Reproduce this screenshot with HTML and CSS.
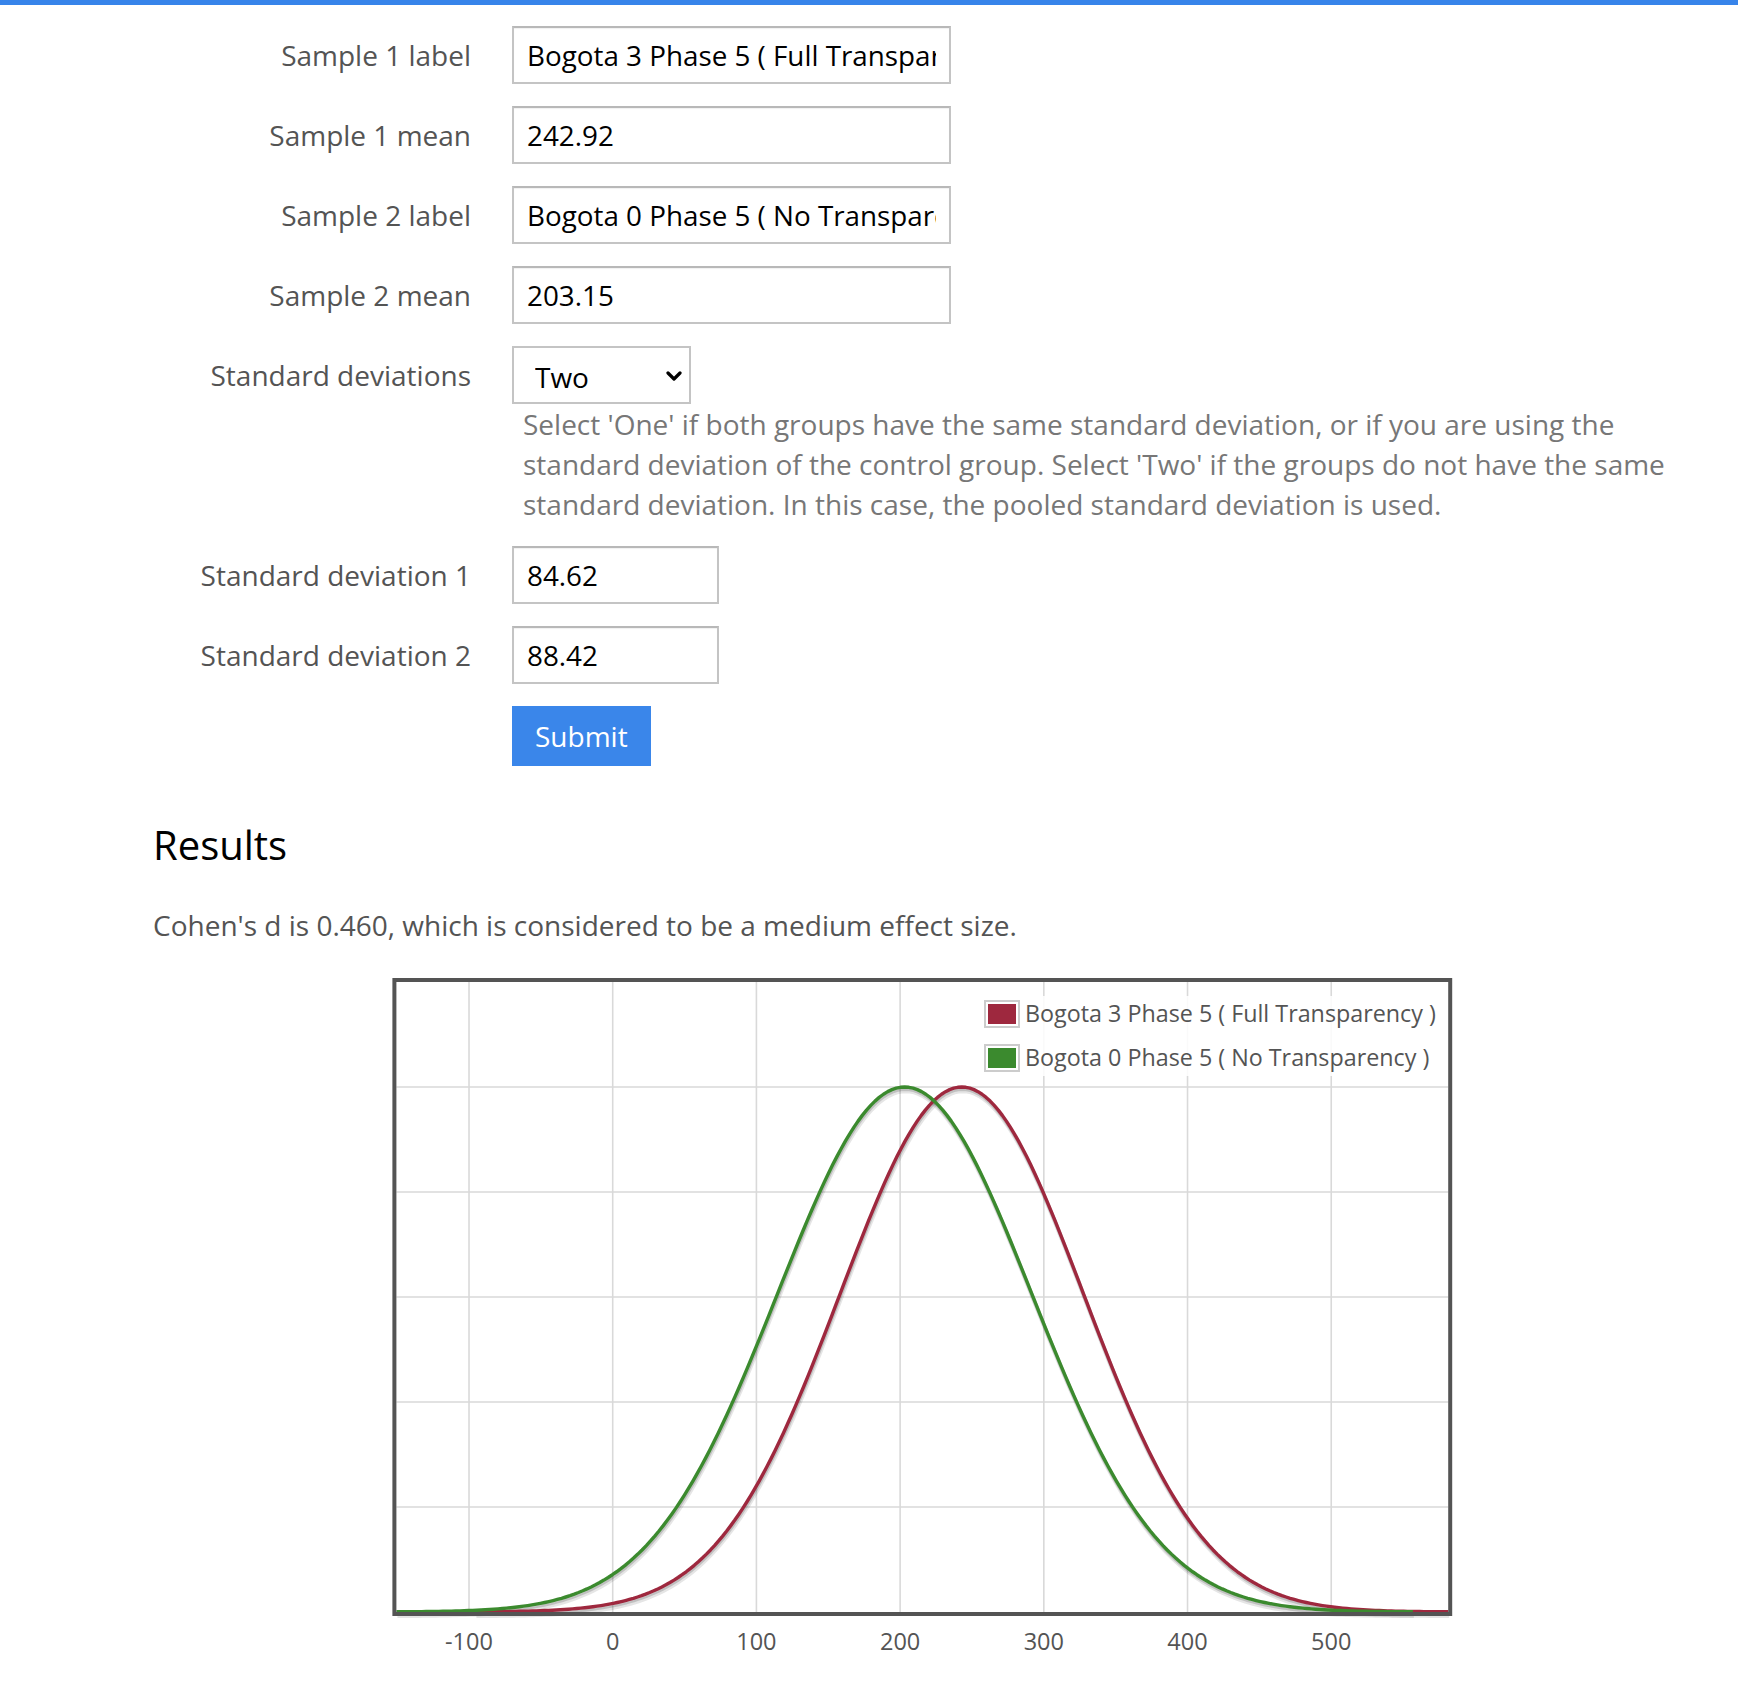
FILE: index.html
```html
<!DOCTYPE html>
<html lang="en">
<head>
<meta charset="utf-8">
<title>Cohen's d calculator</title>
<link rel="stylesheet" href="styles.css">
</head>
<body>
<div class="topbar"></div>
<form class="calc" onsubmit="return false;">
  <div class="row">
    <label class="lbl" for="l1">Sample 1 label</label>
    <div class="ctl"><input id="l1" class="field wide" type="text" value="Bogota 3 Phase 5 ( Full Transparency )"></div>
  </div>
  <div class="row">
    <label class="lbl" for="m1">Sample 1 mean</label>
    <div class="ctl"><input id="m1" class="field wide" type="text" value="242.92"></div>
  </div>
  <div class="row">
    <label class="lbl" for="l2">Sample 2 label</label>
    <div class="ctl"><input id="l2" class="field wide" type="text" value="Bogota 0 Phase 5 ( No Transparency )"></div>
  </div>
  <div class="row">
    <label class="lbl" for="m2">Sample 2 mean</label>
    <div class="ctl"><input id="m2" class="field wide" type="text" value="203.15"></div>
  </div>
  <div class="row">
    <label class="lbl" for="sd">Standard deviations</label>
    <div class="ctl">
      <div class="selwrap">
        <select id="sd" class="sel">
          <option>One</option>
          <option selected>Two</option>
        </select>
        <svg class="chev" width="16" height="10" viewBox="0 0 16 10" aria-hidden="true"><path d="M2 2 L8 8 L14 2" fill="none" stroke="#000" stroke-width="3.2" stroke-linecap="round" stroke-linejoin="round"/></svg>
      </div>
      <p class="help">Select 'One' if both groups have the same standard deviation, or if you are using the standard deviation of the control group. Select 'Two' if the groups do not have the same standard deviation. In this case, the pooled standard deviation is used.</p>
    </div>
  </div>
  <div class="row">
    <label class="lbl" for="s1">Standard deviation 1</label>
    <div class="ctl"><input id="s1" class="field narrow" type="text" value="84.62"></div>
  </div>
  <div class="row">
    <label class="lbl" for="s2">Standard deviation 2</label>
    <div class="ctl"><input id="s2" class="field narrow" type="text" value="88.42"></div>
  </div>
  <div class="row">
    <span class="lbl"></span>
    <div class="ctl"><button class="submit" type="submit">Submit</button></div>
  </div>
</form>

<section class="results">
  <h3 class="res-title">Results</h3>
  <p class="res-text">Cohen's d is 0.460, which is considered to be a medium effect size.</p>
  <svg class="chart" id="chart" width="1100" height="720" viewBox="0 0 1100 720">
    <g id="grid" stroke="#d9d9d9" stroke-width="1.6"></g>
    <g id="curves" fill="none" stroke-linejoin="round" stroke-linecap="butt"></g>
    <rect x="14.4" y="20" width="1055.8" height="634" fill="none" stroke="#545454" stroke-width="4"/>
    <g class="legend">
      <rect x="600" y="36" width="464" height="80" fill="#ffffff" fill-opacity="0.85"/>
      <rect x="605" y="41" width="34" height="26" fill="#fff" stroke="#cccccc" stroke-width="2"/>
      <rect x="608" y="44" width="28" height="20" fill="#9e283e"/>
      <text x="645" y="62">Bogota 3 Phase 5 ( Full Transparency )</text>
      <rect x="605" y="85" width="34" height="26" fill="#fff" stroke="#cccccc" stroke-width="2"/>
      <rect x="608" y="88" width="28" height="20" fill="#3b8a2e"/>
      <text x="645" y="106">Bogota 0 Phase 5 ( No Transparency )</text>
    </g>
    <g id="ticks" class="ticks"></g>
  </svg>
</section>
<script src="script.js"></script>
</body>
</html>
```

FILE: styles.css
```css
* { box-sizing: border-box; }

body {
  margin: 0;
  font-family: "Open Sans", "Noto Sans", "Liberation Sans", sans-serif;
  color: #545454;
  background: #ffffff;
}

.topbar {
  height: 5px;
  background: #3784ea;
}

.calc {
  padding: 21px 38px 0 153px;
}

.row {
  display: grid;
  grid-template-columns: 318px 1fr;
  column-gap: 41px;
  margin-bottom: 22px;
  align-items: start;
}

.lbl {
  display: block;
  text-align: right;
  font-size: 28px;
  line-height: 58px;
  color: #545454;
  white-space: nowrap;
}

.ctl {
  min-width: 0;
}

.field {
  display: block;
  height: 58px;
  padding: 0 13px;
  border: 2px solid #c4c4c4;
  border-top-color: #b8b8b8;
  border-radius: 0;
  box-shadow: inset 0 1px 1px rgba(0, 0, 0, 0.06);
  font-family: inherit;
  font-size: 27.8px;
  color: #000;
  background: #fff;
  outline: none;
}

.wide { width: 439px; }
.narrow { width: 207px; }

.selwrap {
  position: relative;
  width: 179px;
  height: 58px;
}

.sel {
  -webkit-appearance: none;
  appearance: none;
  display: block;
  width: 179px;
  height: 58px;
  padding: 4px 0 0 21px;
  border: 2px solid #c4c4c4;
  border-radius: 0;
  background: #fff;
  font-family: inherit;
  font-size: 28px;
  color: #000;
  outline: none;
}

.chev {
  position: absolute;
  left: 154px;
  top: 25px;
  pointer-events: none;
}

.help {
  margin: 0;
  padding-left: 11px;
  font-size: 28px;
  line-height: 40px;
  color: #777777;
}

.submit {
  display: block;
  height: 60px;
  padding: 0 23px;
  border: none;
  border-radius: 0;
  background: #3a86ea;
  color: #fff;
  font-family: inherit;
  font-size: 28px;
  cursor: pointer;
}

.results {
  padding: 28px 0 0 153px;
}

.res-title {
  margin: 0;
  font-size: 40px;
  font-weight: 400;
  line-height: 57px;
  color: #000;
}

.res-text {
  margin: 34px 0 0;
  font-size: 28px;
  line-height: 37px;
  color: #545454;
}

.chart {
  display: block;
  margin: 16px 0 0 227px;
  font-family: "Open Sans", "Noto Sans", "Liberation Sans", sans-serif;
}

.legend text {
  font-size: 23.3px;
  fill: #545454;
}

.ticks text {
  font-size: 23.5px;
  fill: #545454;
  text-anchor: middle;
}
```

FILE: script.js
```js
(function () {
  var NS = "http://www.w3.org/2000/svg";
  var L = 16.4, R = 1068.2, T = 22, B = 652;
  var xmin = 203.15 - 4 * 88.42, xmax = 242.92 + 4 * 84.62;
  function X(v) { return L + (v - xmin) / (xmax - xmin) * (R - L); }
  function Y(p) { return B - (p / 1.2) * (B - T); }

  var grid = document.getElementById("grid");
  var v, i;
  for (v = -100; v <= 500; v += 100) {
    var ln = document.createElementNS(NS, "line");
    ln.setAttribute("x1", X(v)); ln.setAttribute("x2", X(v));
    ln.setAttribute("y1", T); ln.setAttribute("y2", B);
    grid.appendChild(ln);
  }
  for (i = 1; i <= 5; i++) {
    var h = document.createElementNS(NS, "line");
    h.setAttribute("x1", L); h.setAttribute("x2", R);
    h.setAttribute("y1", Y(i * 0.2)); h.setAttribute("y2", Y(i * 0.2));
    grid.appendChild(h);
  }

  var ticks = document.getElementById("ticks");
  for (v = -100; v <= 500; v += 100) {
    var t = document.createElementNS(NS, "text");
    t.setAttribute("x", X(v));
    t.setAttribute("y", 690);
    t.textContent = String(v);
    ticks.appendChild(t);
  }

  var series = [
    { mu: 242.92, sd: 84.62, color: "#9e283e" },
    { mu: 203.15, sd: 88.42, color: "#3b8a2e" }
  ];
  var curves = document.getElementById("curves");

  function pathFor(s) {
    var a = s.mu - 4 * s.sd, b = s.mu + 4 * s.sd, n = 240, d = "";
    for (var k = 0; k <= n; k++) {
      var x = a + (b - a) * k / n;
      var z = (x - s.mu) / s.sd;
      var y = Math.exp(-0.5 * z * z);
      d += (k ? "L" : "M") + X(x).toFixed(2) + " " + Y(y).toFixed(2);
    }
    return d;
  }

  series.forEach(function (s) {
    var d = pathFor(s);
    var sh1 = document.createElementNS(NS, "path");
    sh1.setAttribute("d", d);
    sh1.setAttribute("stroke", "rgba(0,0,0,0.1)");
    sh1.setAttribute("stroke-width", "4.5");
    sh1.setAttribute("transform", "translate(1,4)");
    curves.appendChild(sh1);
    var sh2 = document.createElementNS(NS, "path");
    sh2.setAttribute("d", d);
    sh2.setAttribute("stroke", "rgba(0,0,0,0.16)");
    sh2.setAttribute("stroke-width", "3.5");
    sh2.setAttribute("transform", "translate(0.5,2.2)");
    curves.appendChild(sh2);
  });
  series.forEach(function (s) {
    var p = document.createElementNS(NS, "path");
    p.setAttribute("d", pathFor(s));
    p.setAttribute("stroke", s.color);
    p.setAttribute("stroke-width", "3.4");
    curves.appendChild(p);
  });
})();
```
